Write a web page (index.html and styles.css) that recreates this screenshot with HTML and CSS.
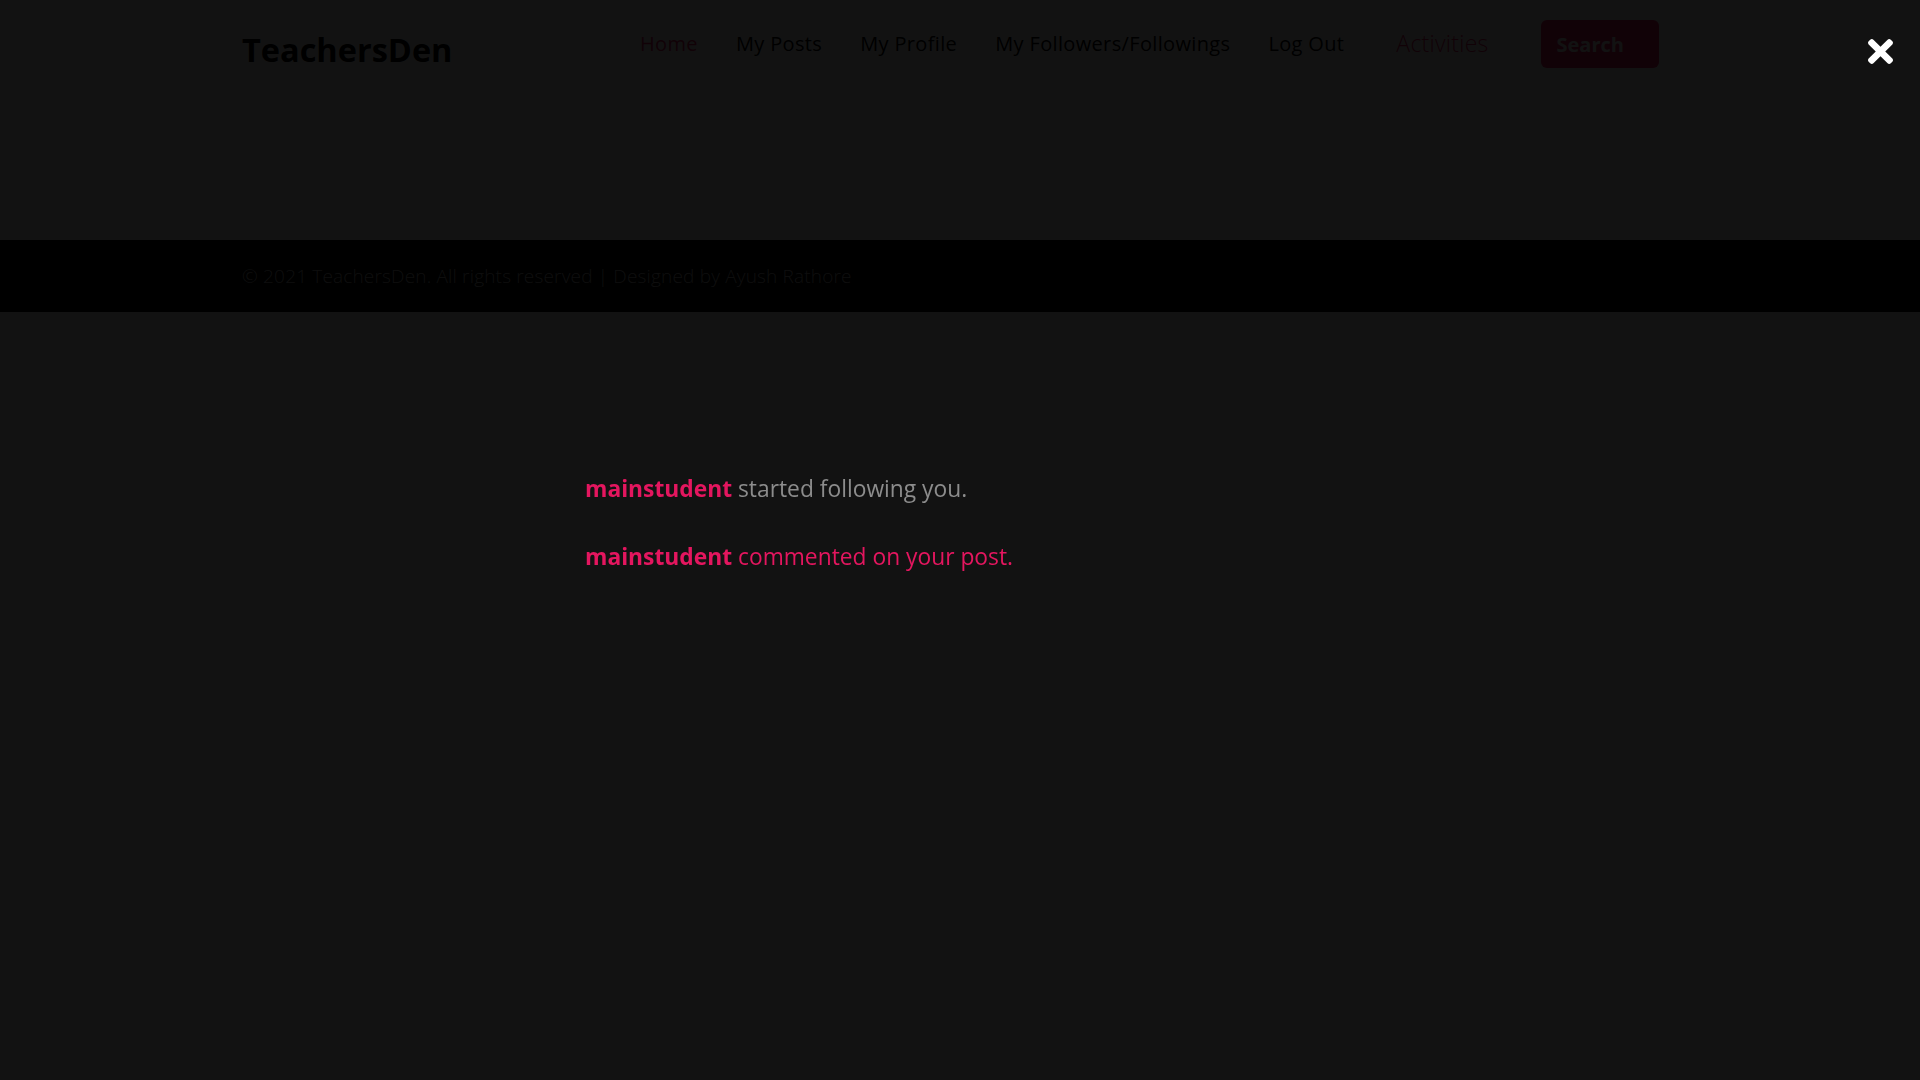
FILE: index.html
```html
<!DOCTYPE html>
<html lang="en">
<head>
<meta charset="utf-8">
<title>TeachersDen - Activities</title>
<link rel="stylesheet" href="styles.css">
</head>
<body>
<div class="page">
  <header class="site-header">
    <a class="logo" href="#">TeachersDen</a>
    <nav class="nav">
      <a class="nav-link active" href="#">Home</a>
      <a class="nav-link" href="#">My Posts</a>
      <a class="nav-link" href="#">My Profile</a>
      <a class="nav-link" href="#">My Followers/Followings</a>
      <a class="nav-link" href="#">Log Out</a>
      <a class="nav-link activities" href="#">Activities</a>
      <button class="search-btn" type="button">Search</button>
    </nav>
  </header>
  <main class="main"></main>
  <footer class="site-footer">
    <p class="copyright">© 2021 TeachersDen. All rights reserved | Designed by Ayush Rathore</p>
  </footer>
</div>

<div class="overlay">
  <a class="close-btn" href="#" aria-label="Close">
    <svg viewBox="0 80 352 352" width="25" height="25" aria-hidden="true">
      <path fill="#fff" d="M242.72 256l100.07-100.07c12.28-12.28 12.28-32.19 0-44.48l-22.24-22.24c-12.28-12.28-32.19-12.28-44.48 0L176 189.28 75.93 89.21c-12.28-12.28-32.19-12.28-44.48 0L9.21 111.45c-12.28 12.28-12.28 32.19 0 44.48L109.28 256 9.21 356.07c-12.28 12.28-12.28 32.19 0 44.48l22.24 22.24c12.28 12.28 32.2 12.28 44.48 0L176 322.72l100.07 100.07c12.28 12.28 32.2 12.28 44.48 0l22.24-22.24c12.28-12.28 12.28-32.19 0-44.48L242.72 256z"/>
    </svg>
  </a>
  <div class="activities-list">
    <p class="activity"><span class="user">mainstudent</span> <span class="msg-follow">started following you.</span></p>
    <p class="activity"><span class="user">mainstudent</span> <span class="msg-comment">commented on your post.</span></p>
  </div>
</div>
</body>
</html>
```

FILE: styles.css
```css
* {
  box-sizing: border-box;
}

html, body {
  margin: 0;
  padding: 0;
}

body {
  background: #ffffff;
  font-family: "Open Sans", "Noto Sans", sans-serif;
  color: #000;
}

.site-header {
  display: flex;
  align-items: flex-start;
  padding: 20px 0 20px 242px;
  height: 88px;
}

.logo {
  font-size: 32.5px;
  font-weight: 700;
  line-height: 48px;
  margin-top: 6px;
  color: #000;
  text-decoration: none;
  width: 398px;
}

.nav {
  display: flex;
  align-items: center;
  height: 48px;
}

.nav-link {
  font-size: 20px;
  line-height: 48px;
  letter-spacing: 0.35px;
  color: #000;
  text-decoration: none;
  margin-right: 38px;
}

.nav-link.active {
  color: #e91e63;
}

.nav-link.activities {
  font-size: 23px;
  font-weight: 300;
  letter-spacing: 0.25px;
  color: #e91e63;
  margin-left: 14px;
  margin-right: 52px;
  margin-top: -2px;
}

.search-btn {
  width: 118px;
  height: 48px;
  border: 0;
  border-radius: 6px;
  background: #e91e63;
  color: #fff;
  font-family: inherit;
  font-size: 20px;
  font-weight: 700;
  text-align: left;
  padding: 0 0 0 16px;
}

.main {
  height: 152px;
}

.site-footer {
  background: #000;
  height: 72px;
  display: flex;
  align-items: center;
  padding-left: 242px;
}

.copyright {
  margin: 0;
  font-size: 19px;
  font-weight: 300;
  letter-spacing: 0.175px;
  color: #bbbbbb;
}

.overlay {
  position: fixed;
  inset: 0;
  background: rgba(0, 0, 0, 0.93);
  padding: 472px 0 0 585px;
}

.close-btn {
  position: absolute;
  top: 39px;
  right: 27px;
  display: block;
  line-height: 0;
}

.activities-list {
  display: flex;
  flex-direction: column;
  gap: 34px;
}

.activity {
  margin: 0;
  font-size: 22.8px;
  line-height: 34px;
}

.user {
  font-weight: 700;
  color: #e4165f;
}

.msg-follow {
  color: #8c8c8c;
}

.msg-comment {
  color: #e4165f;
}
```
